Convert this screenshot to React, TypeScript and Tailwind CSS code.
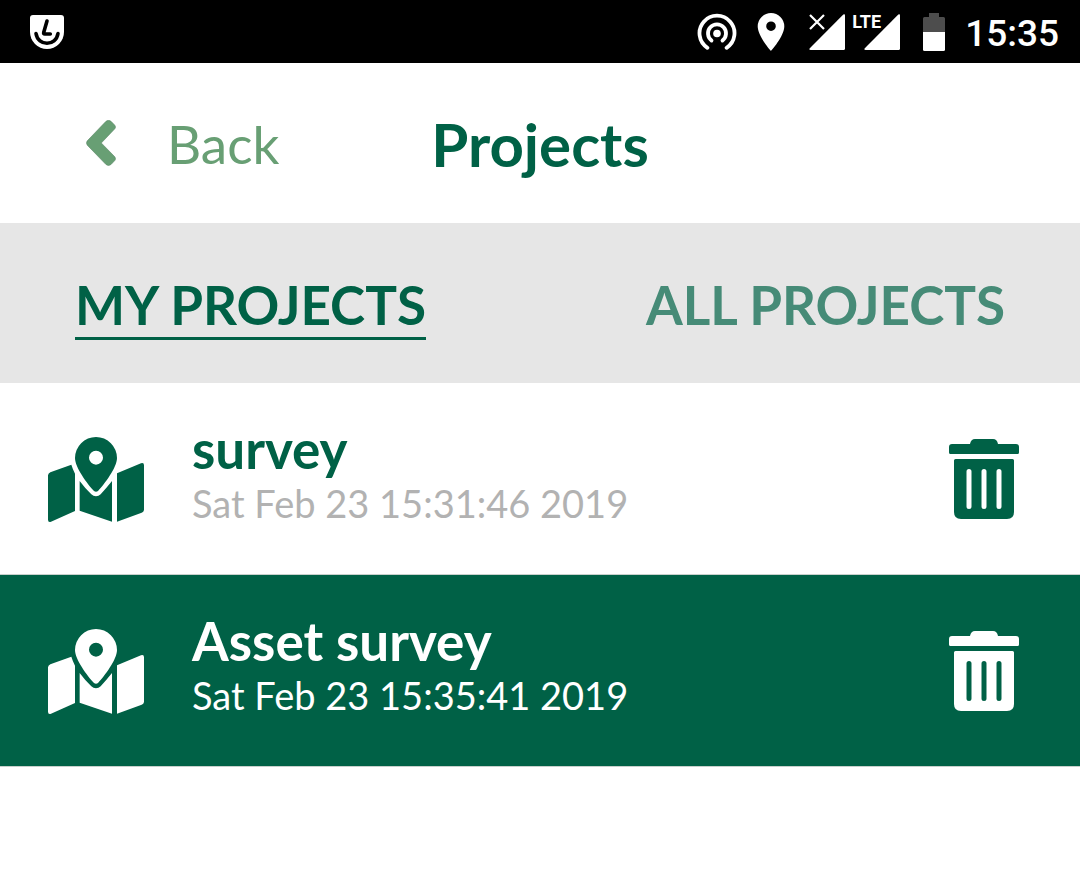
import { useState } from "react";

type Project = { name: string; date: string };

const projects: Project[] = [
  { name: "survey", date: "Sat Feb 23 15:31:46 2019" },
  { name: "Asset survey", date: "Sat Feb 23 15:35:41 2019" },
];

function SignalIcon() {
  return (
    <svg viewBox="0 0 36 36" className="size-9" fill="currentColor" aria-hidden="true">
      <path d="M34.3.6Q36-.5 36 1.5V34.5Q36 36 34.5 36H1.7Q-.5 36 .8 34.2Z" />
    </svg>
  );
}

function StatusBar() {
  return (
    <div className="flex h-[63px] items-center justify-between bg-black pr-[21px] pl-[30px] text-white">
      <svg viewBox="0 0 34 34" className="size-[34px]" aria-label="App notification">
        <path d="M3 0H31Q34 0 34 3V17A17 17 0 0 1 0 17V3Q0 0 3 0Z" fill="white" />
        <g fill="none" stroke="black" strokeWidth="3.6" strokeLinecap="round" strokeLinejoin="round">
          <path d="M17 6L13.7 17.5Q13.3 19 14.8 19H20.3" />
          <path d="M6 18.500C8 31.500 26 31.500 28 18.500" />
        </g>
      </svg>
      <div className="flex items-center">
        <svg viewBox="0 0 40 38" className="h-[38px] w-10" fill="none" stroke="white" strokeWidth="3.8" strokeLinecap="round" aria-label="Hotspot">
          <circle cx="20" cy="20.500" r="3.800" fill="white" stroke="none" />
          <path d="M14.500 27.500A9 9 0 1 1 25.500 27.500" />
          <path d="M10.400 34.800A17.500 17.500 0 1 1 29.600 34.800" />
        </svg>
        <svg viewBox="0 0 28 38" className="ml-5 h-[38px] w-7" fill="white" aria-label="Location">
          <path fillRule="evenodd" d="M14 0A13.300 13.300 0 0 0 .7 13.300C.7 23.300 14 38 14 38S27.300 23.300 27.300 13.300A13.300 13.300 0 0 0 14 0ZM14 18A4.800 4.800 0 1 1 14 8.400A4.800 4.800 0 0 1 14 18Z" />
        </svg>
        <div className="relative ml-6">
          <SignalIcon />
          <svg viewBox="0 0 16 16" className="absolute top-0 left-0 size-4" stroke="white" strokeWidth="2.200" aria-label="No signal">
            <path d="M1 1L15 15M15 1L1 15" />
          </svg>
        </div>
        <div className="relative ml-[19px]">
          <SignalIcon />
          <span className="absolute -top-1 -left-3 font-['Roboto',sans-serif] text-lg leading-6 font-bold">LTE</span>
        </div>
        <svg viewBox="0 0 22 38" className="ml-[23px] h-[38px] w-[22px]" aria-label="Battery half full">
          <path d="M6 0H16V4H20.500Q22 4 22 5.500V19H0V5.500Q0 4 1.500 4H6Z" fill="#4d4d4d" />
          <path d="M0 19H22V36.500Q22 38 20.500 38H1.500Q0 38 0 36.500Z" fill="white" />
        </svg>
        <time className="ml-5 pt-1 font-['Roboto',sans-serif] text-[37px] leading-10 font-medium">15:35</time>
      </div>
    </div>
  );
}

function MapIcon() {
  return (
    <svg viewBox="0 0 288 255" className="h-[85px] w-24" fill="currentColor" aria-hidden="true">
      <path d="M0 115Q1 109 7 106L70 83Q74 96 81 110V222L9 254Q0 257 0 248Z" />
      <path d="M95 132Q112 155 130 172Q136 178 144 178Q152 178 158 172Q176 152 192 132V254L95 221Z" />
      <path d="M207 109L279 79Q288 76 288 85V219Q287 225 281 227L207 254Z" />
      <path
        fillRule="evenodd"
        d="M144 0A63 63 0 0 0 81 63C81 91 118 141 138 162Q144 167 150 162C170 141 207 91 207 63A63 63 0 0 0 144 0ZM144 83A21 21 0 1 1 144 41A21 21 0 0 1 144 83Z"
      />
    </svg>
  );
}

function TrashIcon() {
  return (
    <svg viewBox="0 0 70 80" className="h-20 w-[70px]" fill="currentColor" aria-hidden="true">
      <path d="M0 8Q0 5 3 5H21Q22 0 26 0H44Q48 0 49 5H67Q70 5 70 8V13.500Q70 15 68.500 15H1.500Q0 15 0 13.500Z" />
      <path
        fillRule="evenodd"
        d="M5 21.500Q5 20 6.500 20H63.500Q65 20 65 21.500V73Q65 80 58 80H12Q5 80 5 73ZM17.500 32.500V67.500A2.500 2.500 0 0 0 22.500 67.500V32.500A2.500 2.500 0 0 0 17.500 32.500ZM32.500 32.500V67.500A2.500 2.500 0 0 0 37.500 67.500V32.500A2.500 2.500 0 0 0 32.500 32.500ZM47.500 32.500V67.500A2.500 2.500 0 0 0 52.500 67.500V32.500A2.500 2.500 0 0 0 47.500 32.500Z"
      />
    </svg>
  );
}

export default function App() {
  const [tab, setTab] = useState<"my" | "all">("my");
  const [selected, setSelected] = useState(1);
  const active = "border-[#006146] text-[#006146]";
  const idle = "border-transparent text-[#468b77]";

  return (
    <div className="min-h-screen bg-white font-['Lato',sans-serif]">
      <StatusBar />
      <header className="grid h-40 grid-cols-[1fr_auto_1fr] items-center">
        <button className="ml-[86px] flex items-center gap-[51px] justify-self-start text-[53px] leading-16 text-[#689f74]">
          <svg viewBox="0 0 30 46" className="h-[46px] w-[30px]" fill="currentColor" stroke="#5d8868" strokeWidth=".6" aria-hidden="true">
            <path d="M20 1.300Q22.500-.8 25 1.300L28.800 5.200Q30.200 7 28.800 8.800L15.300 23L28.800 36.800Q30.200 38.800 28.800 40.500L25 44.500Q22.500 46.500 20 44.500L1.300 25.200Q-.3 23 1.300 20.800Z" />
          </svg>
          <span className="pt-0.5">Back</span>
        </button>
        <h1 className="pt-0.5 text-[60px] leading-18 font-bold text-[#006146]">Projects</h1>
      </header>
      <nav className="flex h-40 items-center justify-between bg-[#e6e6e6] px-[75px] text-[53px] leading-16 font-bold">
        <button onClick={() => setTab("my")} className={`border-b-3 pt-1.5 ${tab === "my" ? active : idle}`}>
          MY PROJECTS
        </button>
        <button onClick={() => setTab("all")} className={`border-b-3 pt-1.5 ${tab === "all" ? active : idle}`}>
          ALL PROJECTS
        </button>
      </nav>
      <ul>
        {projects.map((project, index) => (
          <li
            key={project.name}
            className={`flex h-48 items-center border-b border-[#c8d0cc] pt-px pr-[61px] pl-12 ${
              selected === index ? "bg-[#006146] text-white" : "bg-white text-[#006146]"
            }`}
          >
            <button onClick={() => setSelected(index)} className="flex flex-1 items-center gap-12 text-left">
              <MapIcon />
              <span className="flex flex-col pb-4">
                <span className="text-[53px] leading-16 font-bold">{project.name}</span>
                <span className={`text-[38px] leading-11 ${selected === index ? "text-white" : "text-[#b2b2b2]"}`}>
                  {project.date}
                </span>
              </span>
            </button>
            <button aria-label={`Delete ${project.name}`}>
              <TrashIcon />
            </button>
          </li>
        ))}
      </ul>
    </div>
  );
}
